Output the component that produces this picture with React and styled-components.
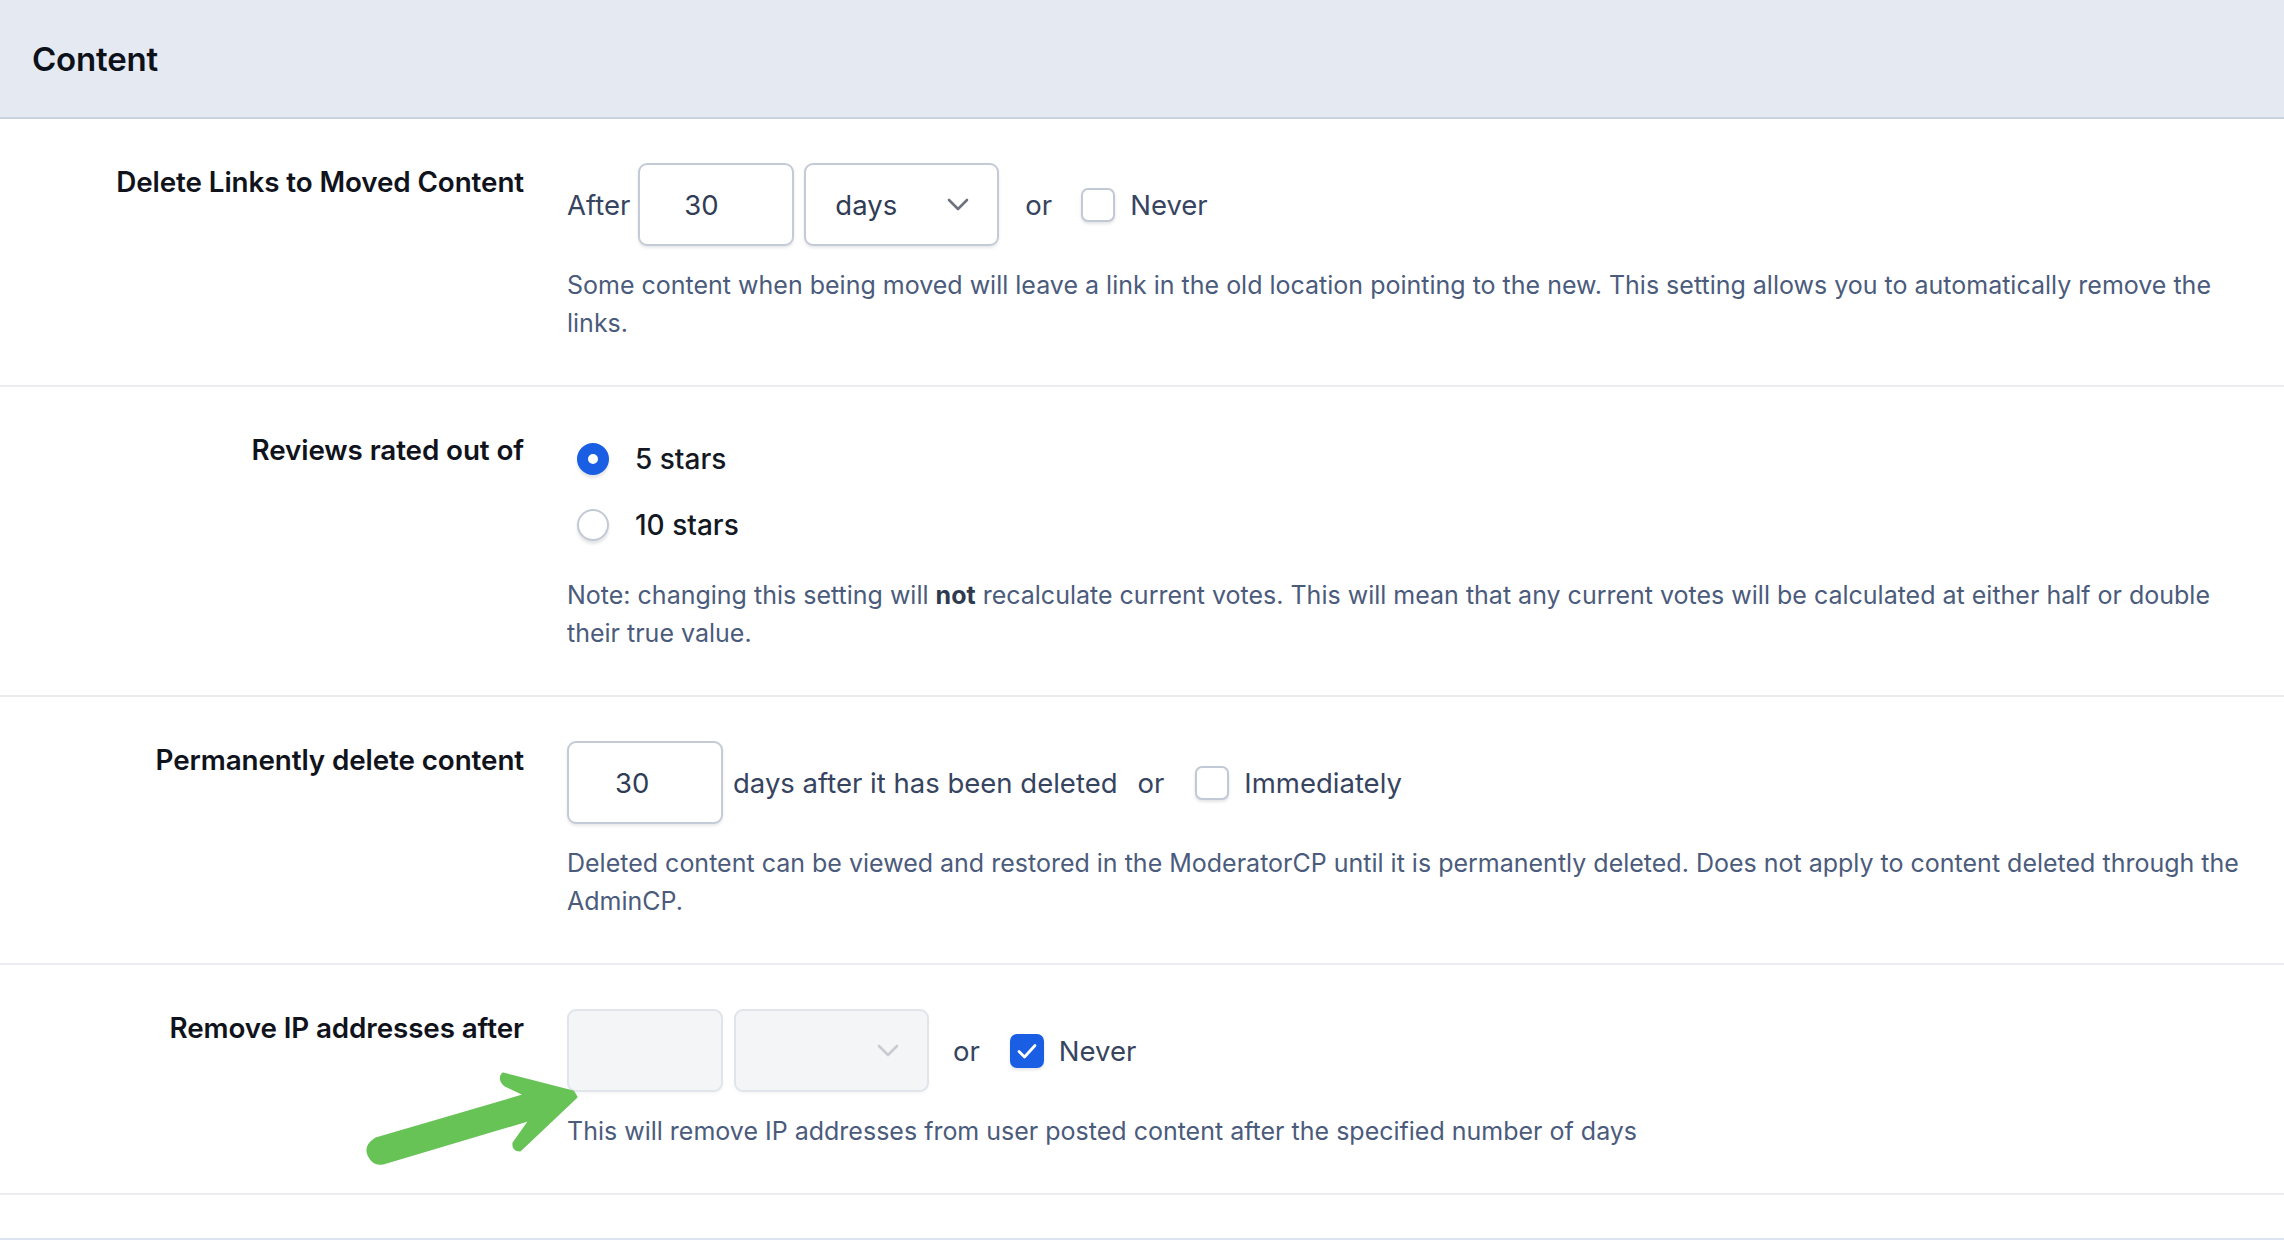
import React from "react";
import styled, { createGlobalStyle } from "styled-components";

const GlobalStyle = createGlobalStyle`
  html, body {
    margin: 0;
    padding: 0;
    background: #ffffff;
    font-family: Inter, "Noto Sans", "Liberation Sans", sans-serif;
    -webkit-font-smoothing: antialiased;
  }
`;

const Page = styled.div`
  width: 2284px;
  height: 1240px;
  overflow: hidden;
  background: #fff;
  display: flex;
  flex-direction: column;
`;

const Header = styled.div`
  height: 117px;
  flex: 0 0 auto;
  display: flex;
  align-items: center;
  padding-left: 32px;
  background: #e5e9f2;
  border-bottom: 2px solid #c9d2df;
`;

const Title = styled.h2`
  margin: 0;
  font-size: 33px;
  font-weight: 600;
  color: #0d111a;
  letter-spacing: -0.2px;
`;

const Row = styled.div`
  position: relative;
  display: grid;
  grid-template-columns: 524px 1fr;
  column-gap: 43px;
  padding: 44px 34px 43px 0;
  border-bottom: 2px solid #ebecef;
`;

const Label = styled.div`
  text-align: right;
  font-size: 27.8px;
  font-weight: 600;
  color: #10131b;
  line-height: 38px;
  letter-spacing: -0.1px;
`;

const Controls = styled.div`
  display: flex;
  flex-direction: column;
`;

const Line = styled.div`
  display: flex;
  align-items: center;
  height: 83px;
`;

const Word = styled.span`
  font-size: 27.5px;
  color: #36445f;
  margin: 0 ${(p) => p.$mr || 0}px 0 ${(p) => p.$ml || 0}px;
  white-space: nowrap;
`;

const Input = styled.div`
  box-sizing: border-box;
  width: ${(p) => p.$w || 156}px;
  height: 83px;
  border-radius: 9px;
  border: 2px solid ${(p) => (p.$disabled ? "#e1e4ea" : "#c5cbd6")};
  background: ${(p) => (p.$disabled ? "#f4f5f7" : "#ffffff")};
  box-shadow: 0 2px 3px rgba(30, 40, 60, ${(p) => (p.$disabled ? 0.04 : 0.1)});
  display: flex;
  align-items: center;
  padding-left: ${(p) => p.$pl || 44}px;
  font-size: 27.5px;
  color: #303c55;
  margin-left: ${(p) => p.$ml || 0}px;
`;

const Select = styled(Input)`
  justify-content: space-between;
  padding-right: 28px;
`;

const Box = styled.span`
  box-sizing: border-box;
  width: 34px;
  height: 34px;
  border-radius: 7px;
  border: 2px solid ${(p) => (p.$checked ? "#1a5ee4" : "#c3c9d4")};
  background: ${(p) => (p.$checked ? "#1a5ee4" : "#fff")};
  box-shadow: 0 2px 3px rgba(30, 40, 60, 0.12);
  display: inline-flex;
  align-items: center;
  justify-content: center;
  margin-right: 15px;
`;

const RadioList = styled.div`
  display: flex;
  flex-direction: column;
  gap: 10px;
  padding-left: 10px;
`;

const RadioItem = styled.label`
  display: flex;
  align-items: center;
  height: 56px;
  font-size: 28px;
  font-weight: 500;
  color: #131823;
`;

const Radio = styled.span`
  box-sizing: border-box;
  width: 32px;
  height: 32px;
  border-radius: 50%;
  border: ${(p) => (p.$checked ? "11px solid #1a5ee4" : "2px solid #c3c9d4")};
  background: #fff;
  box-shadow: 0 3px 3px rgba(30, 40, 60, 0.12);
  margin-right: 26px;
`;

const Help = styled.p`
  margin: ${(p) => p.$mt || 20}px 0 0;
  font-size: 25px;
  line-height: 38px;
  color: #4b5b7c;

  b {
    color: #2f3a50;
    font-weight: 700;
  }
`;

const Arrow = styled.svg`
  position: absolute;
  left: 0;
  top: 0;
  pointer-events: none;
`;

const FooterBar = styled.div`
  margin-top: 43px;
  border-top: 3px solid #dde3ef;
  flex: 1 1 auto;
`;

const Chevron = ({ color }) => (
  <svg width="22" height="14" viewBox="0 0 22 14" fill="none">
    <path d="M2 2l9 9 9-9" stroke={color} strokeWidth="2.6" strokeLinecap="round" strokeLinejoin="round" />
  </svg>
);

const Check = () => (
  <svg width="22" height="18" viewBox="0 0 22 18" fill="none">
    <path d="M3 9.5l5.5 5.5L19 3.5" stroke="#fff" strokeWidth="2.8" strokeLinecap="round" strokeLinejoin="round" />
  </svg>
);

export default function App() {
  return (
    <Page>
      <GlobalStyle />
      <Header>
        <Title>Content</Title>
      </Header>

      <Row>
        <Label>Delete Links to Moved Content</Label>
        <Controls>
          <Line>
            <Word $mr={8}>After</Word>
            <Input $pl={44}>30</Input>
            <Select $w={195} $ml={10} $pl={29}>
              <span>days</span>
              <Chevron color="#6e7280" />
            </Select>
            <Word $ml={26} $mr={29}>or</Word>
            <Box />
            <Word>Never</Word>
          </Line>
          <Help>
            Some content when being moved will leave a link in the old location pointing to the new. This setting allows you to automatically remove the links.
          </Help>
        </Controls>
      </Row>

      <Row>
        <Label>Reviews rated out of</Label>
        <Controls>
          <RadioList>
            <RadioItem>
              <Radio $checked />5 stars
            </RadioItem>
            <RadioItem>
              <Radio />10 stars
            </RadioItem>
          </RadioList>
          <Help $mt={23}>
            Note: changing this setting will <b>not</b> recalculate current votes. This will mean that any current votes will be calculated at either half or double their true value.
          </Help>
        </Controls>
      </Row>

      <Row>
        <Label>Permanently delete content</Label>
        <Controls>
          <Line>
            <Input $pl={46}>30</Input>
            <Word $ml={10} $mr={20}>days after it has been deleted</Word>
            <Word $mr={31}>or</Word>
            <Box />
            <Word>Immediately</Word>
          </Line>
          <Help>
            Deleted content can be viewed and restored in the ModeratorCP until it is permanently deleted. Does not apply to content deleted through the AdminCP.
          </Help>
        </Controls>
      </Row>

      <Row>
        <Label>Remove IP addresses after</Label>
        <Controls>
          <Line>
            <Input $disabled />
            <Select $disabled $w={195} $ml={11}>
              <span />
              <Chevron color="#c8cbd2" />
            </Select>
            <Word $ml={24} $mr={30}>or</Word>
            <Box $checked>
              <Check />
            </Box>
            <Word>Never</Word>
          </Line>
          <Help>This will remove IP addresses from user posted content after the specified number of days</Help>
        </Controls>
        <Arrow width="600" height="230" viewBox="0 977 600 230">
          <path
            d="M573 1104 L503 1086 Q499 1091 505 1097 L526 1107 L376 1151 Q365 1158 369 1167 Q374 1177 383 1175 L531 1131 L514 1155 Q513 1162 520 1162 L576 1109 Z"
            fill="#67c356"
            stroke="#67c356"
            strokeWidth="3"
            strokeLinejoin="round"
          />
        </Arrow>
      </Row>

      <FooterBar />
    </Page>
  );
}
